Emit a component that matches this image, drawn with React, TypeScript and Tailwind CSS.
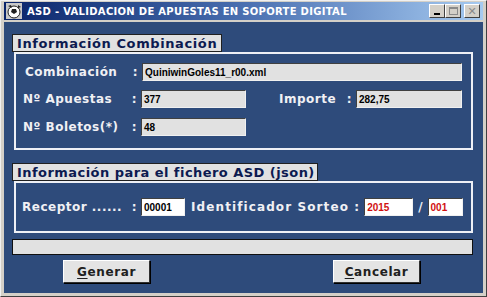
import React from 'react';

const font = { fontFamily: '"DejaVu Sans", Verdana, sans-serif' };
const inputFont = { fontFamily: '"Liberation Sans", Arial, sans-serif' };

function Field({ value, width, white, red }: { value: string; width: string; white?: boolean; red?: boolean }) {
    return (
        <div
            style={inputFont}
            className={`${width} h-[18px] flex items-center pl-[2px] text-[10px] font-bold border border-t-[#404040] border-l-[#404040] border-b-[#f0f0f0] border-r-[#f0f0f0] ${white ? 'bg-white' : 'bg-[#e1e1e1]'} ${red ? 'text-[#d01010]' : 'text-black'}`}
        >
            {value}
        </div>
    );
}

function GroupLabel({ text, width }: { text: string; width: string }) {
    return (
        <div className={`${width} h-[18px] ml-[8px] flex items-center pl-[4px] bg-[#e1e1e1] border border-[#202020] text-[13px] font-bold text-[#0c1a50] leading-none whitespace-nowrap overflow-hidden`}>
            {text}
        </div>
    );
}

function Label({ name, width, colon = true }: { name: string; width: string; colon?: boolean }) {
    return (
        <div className={`${width} flex justify-between pr-[4px] text-[12px] font-bold text-[#f0f0f4] tracking-[0.5px] whitespace-pre`}>
            <span>{name}</span>
            {colon && <span>:</span>}
        </div>
    );
}

function Ball() {
    return (
        <svg width="16" height="16" viewBox="0 0 16 16">
            <rect x="0" y="0" width="16" height="16" fill="#c8c8c8" />
            <circle cx="8" cy="9" r="6" fill="#ffffff" stroke="#202020" strokeWidth="1" />
            <path d="M6 6 L10 6 L11 9 L8 11 L5 9 Z" fill="#202020" />
            <path d="M2 3 L5 2 L6 5 Z M12 2 L15 4 L12 5 Z" fill="#202020" />
        </svg>
    );
}

function WinBtn({ children }: { children: React.ReactNode }) {
    return (
        <div className="w-[16px] h-[14px] bg-[#d4d0c8] border border-t-white border-l-white border-b-[#404040] border-r-[#404040] flex items-center justify-center">
            {children}
        </div>
    );
}

function PushButton({ first, rest, width }: { first: string; rest: string; width: string }) {
    return (
        <div className={`${width} h-[23px] bg-[#e4e4e4] border border-t-white border-l-white border-b-[#303030] border-r-[#303030] shadow-[1px_1px_0_#000] flex items-center justify-center text-[12px] font-bold text-[#202020] tracking-[0.6px]`}>
            <span className="underline underline-offset-2">{first}</span>
            <span>{rest}</span>
        </div>
    );
}

export default function App() {
    return (
        <div style={font} className="w-[487px] h-[297px] bg-[#d4d0c8] border border-t-[#f0f0f0] border-l-[#f0f0f0] border-r-[#404040] border-b-[#404040] flex flex-col px-[3px] pb-[3px] pt-px">
            <div className="h-[18px] flex items-center bg-gradient-to-r from-[#0a246a] via-[#4a6fb0] to-[#a6caf0] pl-[2px] pr-[3px]">
                <Ball />
                <span className="ml-[5px] text-white text-[10px] font-bold tracking-[0.3px]">ASD - VALIDACION DE APUESTAS EN SOPORTE DIGITAL</span>
                <div className="ml-auto flex items-center">
                    <WinBtn><div className="w-[6px] h-[2px] bg-black mt-[6px]" /></WinBtn>
                    <WinBtn><div className="w-[9px] h-[8px] border border-[#8a8a8a] border-t-2" /></WinBtn>
                    <div className="ml-[3px]">
                        <WinBtn><span className="text-[#8a8a8a] text-[11px] font-bold leading-none">✕</span></WinBtn>
                    </div>
                </div>
            </div>
            <div className="flex-1 mt-[2px] bg-[#2e4b7b] flex flex-col pt-[12px] pr-[10px]">
                <GroupLabel text="Información Combinación" width="w-[210px] tracking-[0.6px]" />
                <div className="ml-[10px] h-[98px] border-2 border-[#eef0f6] flex flex-col pt-[9px] gap-[10px]">
                    <div className="flex items-center">
                        <div className="ml-[9px]"><Label name="Combinación" width="w-[117px]" /></div>
                        <Field value="QuiniwinGoles11_r00.xml" width="w-[320px]" />
                    </div>
                    <div className="flex items-center -mt-px">
                        <div className="ml-[7px]"><Label name="Nº Apuestas" width="w-[118px]" /></div>
                        <Field value="377" width="w-[105px]" />
                        <div className="ml-[33px]"><Label name="Importe" width="w-[77px]" /></div>
                        <Field value="282,75" width="w-[106px]" />
                    </div>
                    <div className="flex items-center">
                        <div className="ml-[7px]"><Label name="Nº Boletos(*)" width="w-[118px]" /></div>
                        <Field value="48" width="w-[105px]" />
                    </div>
                </div>
                <GroupLabel text="Información para el fichero ASD (json)" width="w-[306px] mt-[13px] tracking-[0.45px]" />
                <div className="ml-[10px] h-[52px] border-2 border-[#eef0f6] flex items-center">
                    <div className="ml-[6px]"><Label name="Receptor ......" width="w-[119px]" /></div>
                    <Field value="00001" width="w-[44px]" white />
                    <div className="ml-[6px] text-[12px] font-bold text-[#f0f0f4] tracking-[1.1px] whitespace-pre">Identificador Sorteo :</div>
                    <div className="ml-[4px]"><Field value="2015" width="w-[49px]" white red /></div>
                    <span className="mx-[5px] text-[12px] font-bold text-[#f0f0f4]">/</span>
                    <Field value="001" width="w-[35px]" white red />
                </div>
                <div className="ml-[8px] mt-[6px] h-[16px] bg-[#e1e1e1] border border-[#101010]" />
                <div className="flex mt-[5px]">
                    <div className="ml-[59px]"><PushButton first="G" rest="enerar" width="w-[87px]" /></div>
                    <div className="ml-[183px]"><PushButton first="C" rest="ancelar" width="w-[87px]" /></div>
                </div>
            </div>
        </div>
    );
}
